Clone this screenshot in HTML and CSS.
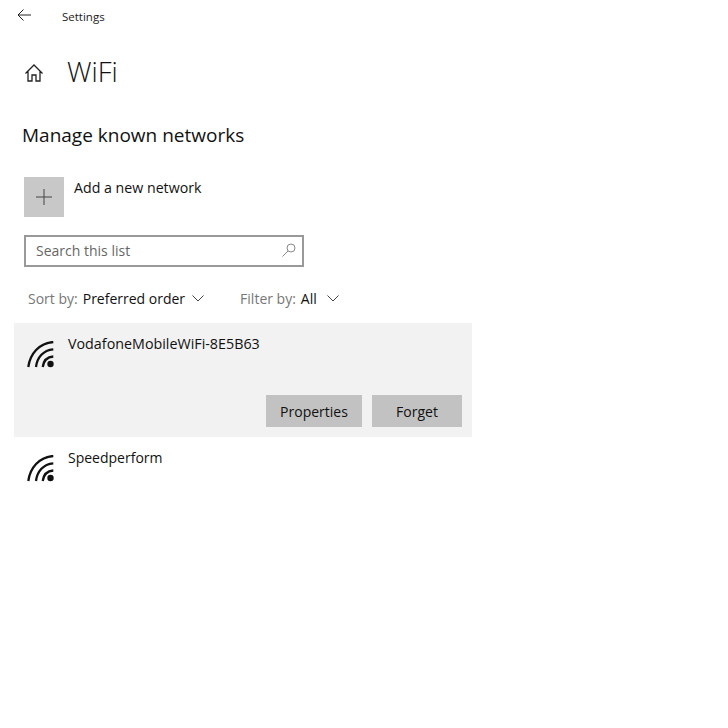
FILE: index.html
```html
<!DOCTYPE html>
<html lang="en">
<head>
    <meta charset="UTF-8">
    <title>Settings</title>
    <link rel="stylesheet" href="styles.css">
</head>
<body>
	<div class="titlebar">
		<svg class="back" width="16" height="16" viewBox="0 0 16 16"><path d="M15 8H2M7.500 2.500L2 8l5.500 5.500" fill="none" stroke="#222" stroke-width="1"/></svg>
		<span class="app">Settings</span>
	</div>
	<div class="page-head">
		<svg class="home" width="20" height="20" viewBox="0 0 20 20"><path d="M1.500 10.500L10 2l8.500 8.500M4 8.500V18h4v-6h4v6h4V8.500" fill="none" stroke="#222" stroke-width="1.300"/></svg>
		<h1>WiFi</h1>
	</div>
	<h2>Manage known networks</h2>
	<div class="add">
		<div class="add-box">
			<svg width="16" height="16" viewBox="0 0 16 16"><path d="M8 0v16M0 8h16" stroke="#444" stroke-width="1"/></svg>
		</div>
		<span>Add a new network</span>
	</div>
	<div class="search">
		<span>Search this list</span>
		<svg width="14" height="14" viewBox="0 0 14 14"><circle cx="9" cy="5" r="4" fill="none" stroke="#888"/><path d="M6 8L.5 13.500" stroke="#888"/></svg>
	</div>
	<div class="filters">
		<div class="filter">
			<span class="dim">Sort by:</span> <span>Preferred order</span>
			<svg width="12" height="7" viewBox="0 0 12 7"><path d="M.5 .5L6 6l5.500-5.500" fill="none" stroke="#444"/></svg>
		</div>
		<div class="filter">
			<span class="dim">Filter by:</span> <span>All</span>
			<svg class="all" width="12" height="7" viewBox="0 0 12 7"><path d="M.5 .5L6 6l5.500-5.500" fill="none" stroke="#444"/></svg>
		</div>
	</div>
	<ul class="list">
		<li class="net selected">
			<div class="net-top">
				<svg class="wifi" width="28" height="28" viewBox="0 0 28 28"><g fill="none" stroke="#111" stroke-width="2.300"><path d="M1.300 26C3 13 12 2 26.300 1"/><path d="M9 26C10 17 16 9 26.300 8.300"/><path d="M15.700 26C16.500 20 20 16 26.300 15.500"/></g><circle cx="23.500" cy="23" r="3.200" fill="#111"/></svg>
				<span class="wide">VodafoneMobileWiFi-8E5B63</span>
			</div>
			<div class="actions">
				<button class="props">Properties</button>
				<button class="forget">Forget</button>
			</div>
		</li>
		<li class="net">
			<div class="net-top">
				<svg class="wifi" width="28" height="28" viewBox="0 0 28 28"><g fill="none" stroke="#111" stroke-width="2.300"><path d="M1.300 26C3 13 12 2 26.300 1"/><path d="M9 26C10 17 16 9 26.300 8.300"/><path d="M15.700 26C16.500 20 20 16 26.300 15.500"/></g><circle cx="23.500" cy="23" r="3.200" fill="#111"/></svg>
				<span>Speedperform</span>
			</div>
		</li>
	</ul>
</body>
</html>
```

FILE: styles.css
```css
body {
	margin: 0;
	background: #fff;
	color: #111;
	font-family: "Open Sans", "Noto Sans", sans-serif;
	font-size: 14px;
}
.titlebar {
	display: flex;
	align-items: center;
	height: 32px;
	padding-left: 16px;
}
.back {
	margin-top: -2px;
}
.app {
	margin-left: 30px;
	font-size: 11.500px;
	color: #222;
}
.page-head {
	display: flex;
	align-items: center;
	height: 80px;
	padding-left: 24px;
}
.home {
	margin-top: 1px;
}
h1 {
	margin: -2px 0 0 23px;
	font-size: 27.500px;
	font-weight: 300;
}
h2 {
	margin: 0 0 0 22px;
	height: 65px;
	font-size: 19px;
	font-weight: 400;
	line-height: 46px;
}
.add {
	display: flex;
	margin-left: 24px;
}
.add span {
	margin-left: 10px;
	font-size: 14.200px;
	line-height: 22px;
}
.add-box {
	display: flex;
	align-items: center;
	justify-content: center;
	width: 40px;
	height: 40px;
	background: #c8c8c8;
}
.search {
	display: flex;
	align-items: center;
	justify-content: space-between;
	box-sizing: border-box;
	width: 280px;
	height: 32px;
	margin: 18px 0 0 24px;
	padding: 0 6px 2px 10px;
	border: 2px solid #999;
	color: #666;
}
.filters {
	display: flex;
	gap: 36px;
	height: 50px;
	padding-top: 6px;
	margin-left: 28px;
	align-items: center;
}
.filter {
	display: flex;
	align-items: center;
	gap: 5px;
}
.filter svg {
	margin-left: 2px;
}
.filter .all {
	margin-left: 5px;
}
.dim {
	color: #777;
}
.list {
	width: 458px;
	margin: 0 0 0 14px;
	padding: 0;
	list-style: none;
}
.net {
	padding: 10px 10px 10px 13px;
}
.selected {
	background: #f2f2f2;
}
.net-top {
	display: flex;
	align-items: flex-start;
}
.net-top span {
	margin-left: 13px;
	line-height: 22px;
}
.net-top .wide {
	font-size: 14.300px;
}
.wifi {
	margin-top: 8px;
}
.actions {
	display: flex;
	justify-content: flex-end;
	gap: 10px;
	margin-top: 26px;
}
button {
	height: 32px;
	padding: 0;
	border: 0;
	background: #c2c2c2;
	color: #111;
	font: inherit;
}
.props {
	width: 96px;
}
.forget {
	width: 90px;
}
```
